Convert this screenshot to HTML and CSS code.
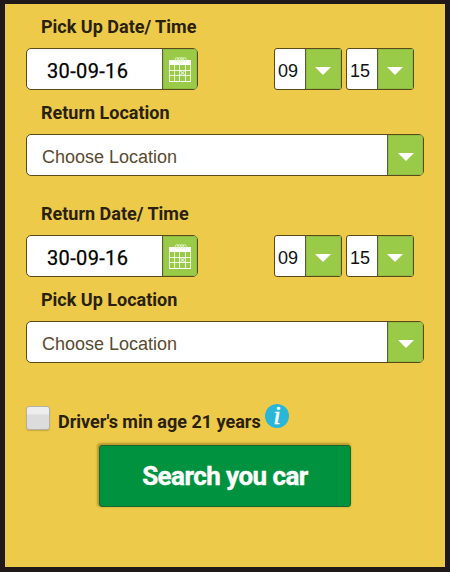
FILE: index.html
```html
<!DOCTYPE html>
<html lang="en">
<head>
<meta charset="utf-8">
<title>Car search</title>
<link rel="stylesheet" href="styles.css">
</head>
<body>
<svg class="defs" width="0" height="0" aria-hidden="true">
  <symbol id="calendar" viewBox="0 0 22 25">
    <path fill="#fff" d="M0 3h22v5H0z"/>
    <path fill="none" stroke="#fff" stroke-opacity=".8" d="M.5 8v16.500M5.500 8v16M10.500 8v16M16.500 8v16M21.500 8v16.500M0 13.500h22M0 18.500h22"/>
    <path stroke="#fff" d="M0 24.500h22"/>
    <g fill="none" stroke="#e2f2c8" stroke-width="1"><circle cx="8" cy="2.500" r="1.800"/><circle cx="10.500" cy="2.500" r="1.800"/><circle cx="13" cy="2.500" r="1.800"/><circle cx="15.500" cy="2.500" r="1.800"/></g>
    <path stroke="#fff" d="M11.500 14l4 4M15.500 14l-4 4"/>
  </symbol>
  <symbol id="arrow" viewBox="0 0 16 8"><path fill="#fff" d="M0 0h16L8 8z"/></symbol>
</svg>
<form class="panel">
  <section class="group">
    <label class="label">Pick Up Date/ Time</label>
    <div class="row">
      <div class="field date"><span class="value">30-09-16</span><span class="addon"><svg class="cal"><use href="#calendar"/></svg></span></div>
      <div class="field time"><span class="value">09</span><span class="addon"><svg class="arrow"><use href="#arrow"/></svg></span></div>
      <div class="field time"><span class="value">15</span><span class="addon"><svg class="arrow"><use href="#arrow"/></svg></span></div>
    </div>
    <label class="label second">Return Location</label>
    <div class="field place"><span class="value">Choose Location</span><span class="addon"><svg class="arrow"><use href="#arrow"/></svg></span></div>
  </section>
  <section class="group">
    <label class="label">Return Date/ Time</label>
    <div class="row">
      <div class="field date"><span class="value">30-09-16</span><span class="addon"><svg class="cal"><use href="#calendar"/></svg></span></div>
      <div class="field time"><span class="value">09</span><span class="addon"><svg class="arrow"><use href="#arrow"/></svg></span></div>
      <div class="field time"><span class="value">15</span><span class="addon"><svg class="arrow"><use href="#arrow"/></svg></span></div>
    </div>
    <label class="label second">Pick Up Location</label>
    <div class="field place"><span class="value">Choose Location</span><span class="addon"><svg class="arrow"><use href="#arrow"/></svg></span></div>
  </section>
  <div class="age">
    <span class="check"></span>
    <span class="age-text">Driver's min age 21 years</span>
    <span class="info">i</span>
  </div>
  <button class="search" type="button">Search you car</button>
</form>
</body>
</html>
```
FILE: styles.css
```css
* { box-sizing: border-box; }
body {
  margin: 0;
  height: 572px;
  padding: 4px 5px 5px;
  background: #1f1a19;
  font-family: Roboto, sans-serif;
  overflow: hidden;
}
.defs { display: none; }
.panel {
  height: 563px;
  padding: 12px 21px 0;
  background: #edca4a;
}
.group { margin-bottom: 27px; }
.label {
  display: block;
  height: 22px;
  margin: 0 0 10px 15px;
  font-size: 18px;
  line-height: 22px;
  font-weight: 700;
  color: #2a210d;
  white-space: nowrap;
}
.second { margin-top: 12px; }
.row { display: flex; gap: 4px; }
.field {
  display: flex;
  height: 42px;
  border: 1px solid #5a4a1a;
  border-radius: 3px;
  background: #fff;
  overflow: hidden;
}
.value {
  flex: 1;
  line-height: 44px;
  white-space: nowrap;
}
.addon {
  display: flex;
  justify-content: center;
  align-items: center;
  width: 36px;
  border-left: 1px solid #55602f;
  background: #99cb48;
  box-shadow: inset 0 0 0 1px #8dbd41;
}
.date { width: 172px; margin-right: 72px; border-radius: 5px; }
.date .value {
  padding-left: 20px;
  font-size: 20px;
  font-weight: 400;
  letter-spacing: .35px;
  -webkit-text-stroke: .25px #000;
  color: #000;
}
.date .addon { width: 35px; }
.time { width: 68px; }
.time .value {
  padding-left: 3px;
  font: 18px/44px "Liberation Sans", sans-serif;
  color: #111;
}
.place { width: 398px; border-radius: 5px; }
.place .value {
  padding-left: 15px;
  font: 18px/44px "Liberation Sans", sans-serif;
  color: #5a4a30;
}
.cal { width: 22px; height: 25px; }
.arrow { width: 16px; height: 8px; margin: 4px 1px 0 0; }
.place .arrow { margin-right: 0; }
.age { display: flex; height: 26px; margin-top: 41px; }
.check {
  flex: none;
  width: 24px;
  height: 24px;
  margin-top: 2px;
  border: 1px solid #b3b0aa;
  border-radius: 3px;
  background: linear-gradient(#ededed 0 30%, #dcdcdc 36%);
  box-shadow: 0 1px 1px rgba(90, 70, 10, .25);
}
.age-text {
  flex: none;
  width: 215px;
  padding: 7px 0 0 8px;
  font-size: 18px;
  line-height: 22px;
  font-weight: 700;
  color: #2a210d;
  white-space: nowrap;
}
.info {
  flex: none;
  width: 24px;
  height: 24px;
  border-radius: 50%;
  background: #29b6d8;
  color: #fff;
  font: italic 400 25px/23px "Liberation Serif", serif;
  -webkit-text-stroke: .7px #fff;
  text-align: center;
}
.search {
  display: block;
  width: 252px;
  height: 62px;
  margin: 15px 0 0 73px;
  padding: 0;
  border: 1px solid #16682f;
  border-radius: 3px;
  background: #00923f;
  box-shadow: -1px -1px 2px 1px rgba(110, 80, 0, .4);
  color: #fff;
  font: 700 26px/60px Roboto, sans-serif;
  letter-spacing: -.55px;
  -webkit-text-stroke: .4px #fff;
}
```
